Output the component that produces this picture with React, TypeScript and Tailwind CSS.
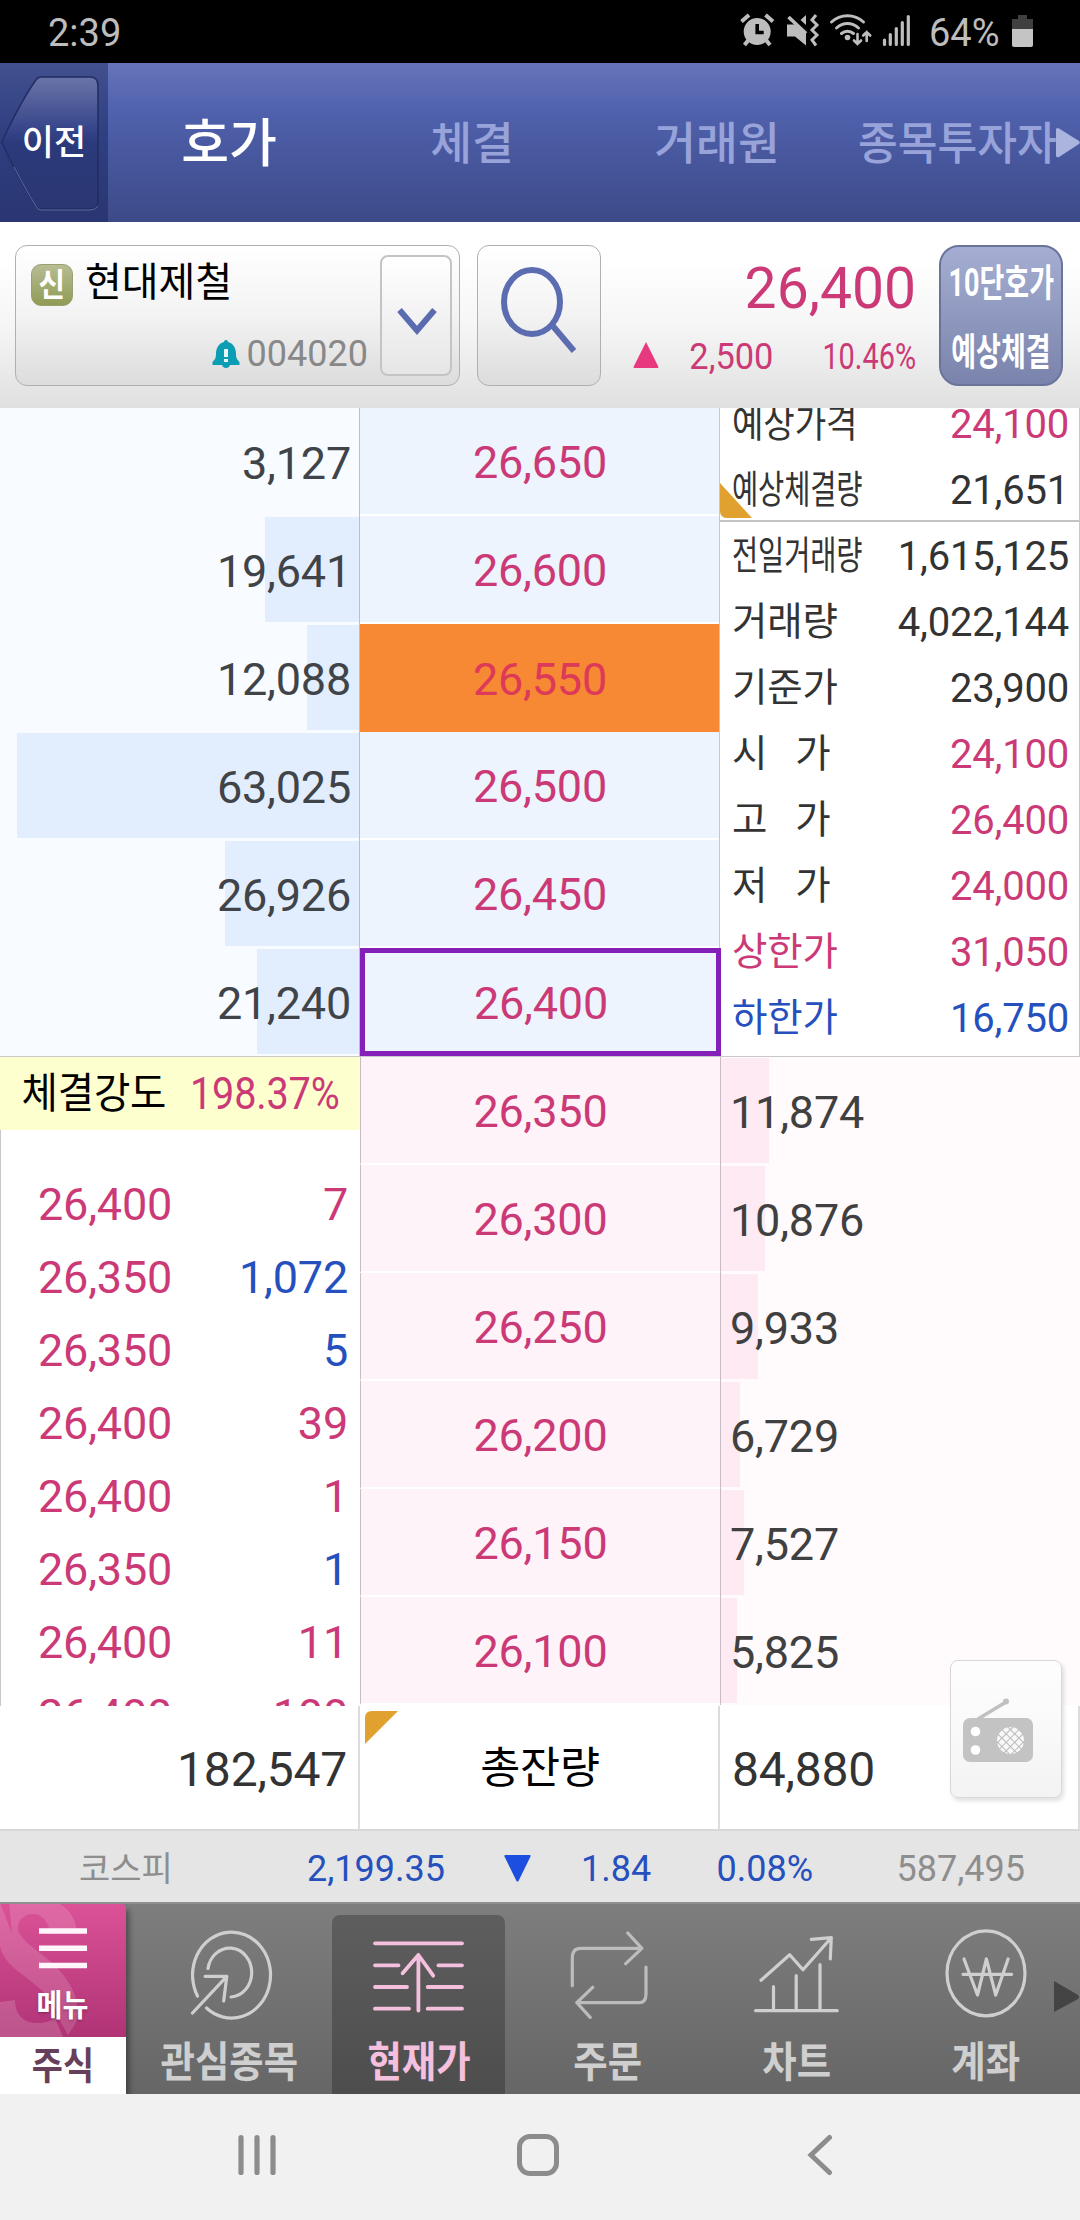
import { ReactNode } from 'react';

const UP = 'text-[#cb3a76]';
const DOWN = 'text-[#2550bd]';
const INK = 'text-[#333333]';

const TABS = [
  { label: '체결', cls: 'w-[240px] pl-[4px]' },
  { label: '거래원', cls: 'w-[248px] pl-[6px]' },
];

const ASKS = [
  { price: '26,650', qty: '3,127', bar: 0 },
  { price: '26,600', qty: '19,641', bar: 94 },
  { price: '26,550', qty: '12,088', bar: 52, marked: true },
  { price: '26,500', qty: '63,025', bar: 342 },
  { price: '26,450', qty: '26,926', bar: 134 },
  { price: '26,400', qty: '21,240', bar: 102, current: true },
];

const BIDS = [
  { price: '26,350', qty: '11,874', bar: 48 },
  { price: '26,300', qty: '10,876', bar: 44 },
  { price: '26,250', qty: '9,933', bar: 37 },
  { price: '26,200', qty: '6,729', bar: 19 },
  { price: '26,150', qty: '7,527', bar: 23 },
  { price: '26,100', qty: '5,825', bar: 16 },
];

const INFO = [
  { label: '예상가격', value: '24,100', color: UP, squeeze: 'scale-x-[0.89]' },
  { label: '예상체결량', value: '21,651', squeeze: 'scale-x-[0.74]' },
  { label: '전일거래량', value: '1,615,125', squeeze: 'scale-x-[0.74]' },
  { label: '거래량', value: '4,022,144' },
  { label: '기준가', value: '23,900' },
  { label: '시   가', value: '24,100', color: UP },
  { label: '고   가', value: '26,400', color: UP },
  { label: '저   가', value: '24,000', color: UP },
  { label: '상한가', value: '31,050', color: UP, labelColor: UP },
  { label: '하한가', value: '16,750', color: DOWN, labelColor: DOWN },
];

const TRADES = [
  { price: '26,400', qty: '7', color: UP },
  { price: '26,350', qty: '1,072', color: DOWN },
  { price: '26,350', qty: '5', color: DOWN },
  { price: '26,400', qty: '39', color: UP },
  { price: '26,400', qty: '1', color: UP },
  { price: '26,350', qty: '1', color: DOWN },
  { price: '26,400', qty: '11', color: UP },
  { price: '26,400', qty: '100', color: UP },
];

function StatusBar() {
  return (
    <div className="flex h-[63px] items-center bg-black pt-[2px] text-[38px] text-[#bdbdbd]">
      <span className="pl-[48px]">2:39</span>
      <svg className="-mt-[2px] ml-auto" width="185" height="63" viewBox="0 0 185 63" fill="#bdbdbd">
        {/* alarm */}
        <path d="M2.500 21.500 10 15M34 21.500 26.500 15" stroke="#bdbdbd" strokeWidth="4" />
        <circle cx="18.200" cy="31.500" r="13.500" />
        <path d="M9.500 40 5.500 45M27 40l4 5" stroke="#bdbdbd" strokeWidth="4" />
        <path d="M18.200 24v8.500h6.500" fill="none" stroke="#000" strokeWidth="3.600" />
        {/* muted, vibrating */}
        <path d="M48 24.500h7l12 7.500v13.500L56 36.500h-8zM67 15v10l-5.500-5z" />
        <path d="M49.500 17 67 33.500" stroke="#bdbdbd" strokeWidth="3.600" />
        <path d="m77 15-4 5 5 5-5 5 5 5-5 5 4 5.500" fill="none" stroke="#bdbdbd" strokeWidth="3" />
        {/* wifi */}
        <g fill="none" stroke="#bdbdbd" strokeWidth="3" strokeLinecap="round">
          <path d="M92.500 22c9-8.500 23-8.500 32 0M97.500 28c6.500-6 15.500-6 22 0M102.500 33.500c3.500-3 8.500-3 12 0" />
          <path d="M118.500 34v9M115 40.500l3.500 3.500 3.500-3.500M127.700 41v-9M124.200 35.500l3.500-3.500 3.500 3.500" strokeWidth="2.600" />
        </g>
        <circle cx="108.500" cy="37.500" r="2.800" />
        {/* signal */}
        <path d="M145.500 40v4.500M151.300 34.500v10M157.300 28.500v16M163.300 22.500v22M169.300 16.500v28" stroke="#bdbdbd" strokeWidth="3.200" strokeLinecap="round" />
      </svg>
      <span className="ml-[5px] w-[71px]">64%</span>
      <svg className="-mt-[2px] mr-[46px] ml-[12px]" width="22" height="63" viewBox="0 0 22 63">
        <path d="M6 15h9v4h6v10H0V19h6z" fill="#404040" />
        <path d="M0 29h21v16a2 2 0 0 1-2 2H2a2 2 0 0 1-2-2z" fill="#c4c4c4" />
      </svg>
    </div>
  );
}

function TopTabs() {
  return (
    <header className="flex h-[159px] bg-linear-to-b from-[#6675ba] via-[#5061ad] via-30% to-[#3c4a88]">
      <div className="relative flex w-[108px] items-center justify-center bg-linear-to-b from-[#42508f] via-[#2f3f80] via-45% to-[#293672]">
        <svg className="absolute inset-0" width="108" height="159" viewBox="0 0 108 159">
          <defs>
            <linearGradient id="back" x1="0" y1="0" x2="0" y2="1">
              <stop offset="0" stopColor="#6a74a8" />
              <stop offset="0.400" stopColor="#36458a" />
              <stop offset="0.500" stopColor="#2b3a7b" />
              <stop offset="1" stopColor="#2a3772" />
            </linearGradient>
          </defs>
          <path d="M1.500 79C12 58 22 36 36 17q2-3 5-3h49q8 0 8 9v114q0 9-8 9H41q-3 0-5-3C22 123 12 101 1.500 79z" fill="url(#back)" stroke="#222d62" strokeWidth="1.500" />
          <path d="M14 104c7 13 13 25 22 39q2 4 5 4h49q5 0 8-4" fill="none" stroke="#5d68a0" strokeWidth="1" />
        </svg>
        <span className="relative mt-[2px] text-[35px] font-medium text-white">이전</span>
      </div>
      <div className="flex min-w-0 flex-1 items-center pt-[4px] text-[45.500px] font-medium text-[#98a3da]">
        <span className="w-[242px] text-center text-[52px] font-medium text-white">호가</span>
        {TABS.map(t => (
          <span key={t.label} className={`${t.cls} text-center`}>{t.label}</span>
        ))}
        <span className="origin-left scale-x-[0.95] pl-[21px] whitespace-nowrap">종목투자자</span>
      </div>
      <svg className="absolute left-[1055px] top-[127px]" width="25" height="32" viewBox="0 0 25 32">
        <path d="M1 3q0-3 3-1.500l20 12.500q1.500 1.500 0 3L4 30q-3 1-3-1.500z" fill="#aab4df" />
      </svg>
    </header>
  );
}

function StockBar() {
  return (
    <div className="flex h-[186px] items-start bg-linear-to-b from-white from-20% via-[#f6f6f6] via-55% to-[#e0e0e0] pt-[23px]">
      <div className="ml-[15px] flex h-[141px] w-[445px] rounded-xl border border-[#b0b0b0] bg-linear-to-b from-white via-[#f3f3f3] to-[#dcdcdc]">
        <div className="flex flex-1 flex-col">
          <div className="flex items-center pt-[12px] pl-[15px]">
            <div className="mt-[4px] flex h-[42px] w-[42px] items-center justify-center rounded-[10px] border border-[#9aa070] bg-linear-to-b from-[#b8bc94] to-[#909b55] text-[32px] leading-none font-bold text-white">
              <span className="scale-x-[0.9]">신</span>
            </div>
            <span className="ml-[12px] text-[40px] leading-[50px] text-black">현대제철</span>
          </div>
          <div className="mt-[21px] flex items-center justify-end pr-[12px] text-[36px] leading-[50px] text-[#888]">
            <svg className="mr-[7px]" width="28" height="28" viewBox="0 0 28 28">
              <path d="M14 0q2 0 2 2c6 1.500 8 7 8 12 0 4 1 5.500 3.500 8v3H18q-1 3-4 3t-4-3H.5v-3C3 19.500 4 18 4 14 4 9 6 3.500 12 2q0-2 2-2z" fill="#0a9db3" />
              <path d="M14 9v8M14 19v3" stroke="#e8f8fa" strokeWidth="4" />
            </svg>
            <span>004020</span>
          </div>
        </div>
        <div className="mt-[9px] mr-[7px] flex h-[121px] w-[72px] items-center justify-center rounded-lg border-2 border-[#c4c4c4] bg-linear-to-b from-white to-[#e6e6e6]">
          <svg className="mt-[8px] ml-[1px]" width="42" height="32" viewBox="0 0 42 32">
            <path d="M3.500 6 21 26.500 38.500 6" fill="none" stroke="#5a6bb0" strokeWidth="6" />
          </svg>
        </div>
      </div>
      <div className="ml-[17px] h-[141px] w-[124px] rounded-xl border border-[#b0b0b0] bg-linear-to-b from-white via-[#f3f3f3] to-[#dcdcdc]">
        <svg width="122" height="139" viewBox="0 0 122 139" fill="none" stroke="#5b6cb0" strokeWidth="6">
          <ellipse cx="54" cy="56" rx="28" ry="32" />
          <path d="m74 79 22 26" />
        </svg>
      </div>
      <div className="flex w-[315px] flex-col">
        <span className={`mt-[9px] text-right text-[57px] leading-[70px] ${UP}`}>26,400</span>
        <div className={`mt-[10px] flex items-center justify-end text-[37px] leading-[46px] ${UP}`}>
          <svg className="mb-[4px]" width="26" height="26" viewBox="0 0 26 26">
            <path d="M13 0 25.500 25q0 1-1 1h-23q-1 0-1-1z" fill="#e8397f" />
          </svg>
          <span className="ml-[24px] w-[90px] origin-right scale-x-[0.93]">2,500</span>
          <span className="ml-[23px] w-[120px] origin-right scale-x-[0.78]">10.46%</span>
        </div>
      </div>
      <div className="ml-[23px] flex h-[141px] w-[124px] flex-col items-center rounded-[20px] border-2 border-[#6a7499] bg-linear-to-b from-[#a5aed2] to-[#7a83ab] text-[38px] leading-[70px] font-bold whitespace-nowrap text-white">
        <div className="flex h-[70px] justify-center pt-[1px]"><span className="scale-x-[0.71]">10단호가</span></div>
        <div className="h-[2px] w-[116px] bg-[#c3cae4]" />
        <div className="flex h-[67px] justify-center"><span className="scale-x-[0.71]">예상체결</span></div>
      </div>
    </div>
  );
}

function AskRow({ price, qty, bar, marked, current }: { price: string; qty: string; bar: number; marked?: boolean; current?: boolean }) {
  let cell = 'w-[359px] border-b-2 border-white bg-[#edf4fe]';
  if (marked) cell = 'w-[359px] bg-[#f78834] text-[#dc3a58]';
  // last traded price, its frame overlaps the column rule
  if (current) cell = 'relative z-10 w-[361px] border-[5px] border-[#8420b8] bg-[#edf4fe]';
  return (
    <div className="flex h-[108px]">
      <div className="relative flex w-[360px] shrink-0 items-center justify-end border-r border-[#bcc0c6] bg-[#f8fbff] pt-[3px] pr-[8px] text-[#404448]">
        <div className="absolute top-px right-0 bottom-[2px] bg-[#e2edfd]" style={{ width: bar }} />
        <span className="relative">{qty}</span>
      </div>
      <div className={`flex shrink-0 items-center justify-center pt-[3px] pl-[1px] ${marked ? '' : UP} ${cell}`}>{price}</div>
    </div>
  );
}

function InfoPanel() {
  return (
    <div className="h-[648px] flex-1 overflow-hidden border-r border-l border-[#c8c8c8] bg-white">
      <div className={`-mt-[18px] text-[40px] ${INK}`}>
        {INFO.map((r, i) => (
          <div key={i} className={`relative flex h-[66px] items-center justify-between pr-[10px] pl-[12px] ${i === 1 ? 'border-b-2 border-[#c4c4c4] pt-[5px]' : 'pt-[3px]'}`}>
            {i === 1 && (
              <svg className="absolute bottom-[2px] left-0" width="32" height="35" viewBox="0 0 32 35">
                <path d="M0 0 32 35H7q-7 0-7-7z" fill="#e0a12e" />
              </svg>
            )}
            <span className={`relative w-[110px] origin-left text-[38.500px] whitespace-pre ${r.squeeze ?? ''} ${r.labelColor ?? ''}`}>{r.label}</span>
            <span className={r.color ?? ''}>{r.value}</span>
          </div>
        ))}
      </div>
    </div>
  );
}

function OrderBook() {
  return (
    <div className="flex h-[1298px] flex-col text-[45px] tracking-[-0.2px]">
      <div className="flex">
        <div className="w-[719px]">
          {ASKS.map(a => <AskRow key={a.price} {...a} />)}
        </div>
        <InfoPanel />
      </div>
      <div className="flex h-[650px] overflow-hidden border-t border-[#c8c8c8]">
        <div className="flex w-[360px] flex-col bg-white">
          <div className="flex h-[73px] shrink-0 items-center bg-[#feffce]">
            <span className="w-[164px] origin-left scale-x-[0.94] pl-[23px] text-[42px] whitespace-nowrap text-black">체결강도</span>
            <span className={`ml-[26px] origin-left scale-x-[0.88] ${UP}`}>198.37%</span>
          </div>
          <div className="h-[576px] overflow-hidden border-l border-[#c8c8c8] pt-[38px]">
            {TRADES.map((t, i) => (
              <div key={i} className="flex h-[73px] items-center justify-between pr-[12px] pl-[37px]">
                <span className={UP}>{t.price}</span>
                <span className={t.color}>{t.qty}</span>
              </div>
            ))}
          </div>
        </div>
        <div className="flex-1">
          {BIDS.map(b => (
            <div key={b.price} className="flex h-[108px]">
              <div className={`flex w-[360px] items-center justify-center border-b-2 border-l border-b-white border-l-[#c8bcc4] bg-[#fef3f9] pt-[3px] ${UP}`}>{b.price}</div>
              <div className="relative flex flex-1 items-center border-l border-[#c8bcc4] bg-[#fffafb] pt-[3px] pl-[9px] text-[#404040]">
                <div className="absolute top-px bottom-[2px] left-0 bg-[#fdeaf3]" style={{ width: b.bar }} />
                <span className="relative">{b.qty}</span>
              </div>
            </div>
          ))}
        </div>
      </div>
    </div>
  );
}

function Totals() {
  return (
    <div className="relative flex h-[125px] border-b-2 border-[#d8d8d8] bg-white text-[48px] tracking-[-0.2px]">
      <div className={`flex w-[360px] items-center justify-end border-r-2 border-[#dcdcdc] pt-[4px] pr-[11px] ${INK}`}>182,547</div>
      <div className="relative flex w-[360px] items-center justify-center border-r-2 border-[#dcdcdc] pt-[2px] pl-[2px] text-[43.500px] text-black">
        <svg className="absolute top-[5px] left-[5px]" width="33" height="33" viewBox="0 0 33 33">
          <path d="M0 33V7q0-7 7-7h26z" fill="#e0a12e" />
        </svg>
        총잔량
      </div>
      <div className={`flex flex-1 items-center border-r-2 border-[#dcdcdc] pt-[4px] pl-[12px] ${INK}`}>84,880</div>
      <div className="absolute -top-[46px] left-[950px] h-[138px] w-[112px] rounded-lg border border-[#d8d8d8] bg-linear-to-b from-white/80 to-[#f3f3f3] shadow-[2px_3px_4px_rgba(0,0,0,0.12)]">
        <svg width="110" height="136" viewBox="0 0 110 136">
          <defs>
            <pattern id="mesh" width="6" height="6" patternUnits="userSpaceOnUse" patternTransform="rotate(45)">
              <rect width="6" height="6" fill="#f8f8f8" />
              <path d="M0 0h6M0 0v6" stroke="#bbb" strokeWidth="2" />
            </pattern>
          </defs>
          <path d="M27 58 55 41" stroke="#c0c0c0" strokeWidth="3.500" />
          <circle cx="55" cy="40.500" r="3" fill="#c0c0c0" />
          <rect x="12" y="57" width="70" height="44" rx="7" fill="#c3c3c3" />
          <circle cx="24.500" cy="70.500" r="4.800" fill="#fff" />
          <circle cx="24.500" cy="89" r="4.800" fill="#fff" />
          <circle cx="59.500" cy="79.500" r="13.500" fill="url(#mesh)" />
        </svg>
      </div>
    </div>
  );
}

function IndexTicker() {
  return (
    <div className={`flex h-[71px] items-center bg-[#e5e5e5] pt-[5px] text-[36px] ${DOWN}`}>
      <span className="w-[227px] pl-[79px] text-[34px] text-[#8e8e8e]">코스피</span>
      <span className="w-[218px] text-right">2,199.35</span>
      <svg className="-mt-[2px] ml-[59px]" width="27" height="27" viewBox="0 0 27 27">
        <path d="M1 0h25q1 .500.500 1.500L14.500 26q-1 1-2 0L.500 1.500Q0 .500 1 0z" fill="#1c4fdf" />
      </svg>
      <span className="ml-[50px] w-[70px]">1.84</span>
      <span className="w-[162px] text-right">0.08%</span>
      <span className="w-[212px] text-right text-[#8e8e8e]">587,495</span>
    </div>
  );
}

function NavItem({ label, active, thin, children }: { label: string; active?: boolean; thin?: boolean; children: ReactNode }) {
  return (
    <div className="flex w-[189px] shrink-0 justify-center">
      <div className={`flex w-[173px] flex-col items-center rounded-t-lg ${active ? 'mt-[11px] bg-linear-to-b from-[#5e5e5e] to-[#4d4d4d] pt-[5px] text-[#f5c0dd]' : 'pt-[15px] text-[#cfcfcf]'}`}>
        <svg width="100" height="110" viewBox="0 0 100 110" fill="none" stroke="currentColor" strokeWidth={active ? 3.8 : 3.2} strokeLinecap="round" strokeLinejoin="round" opacity={thin ? 0.8 : 1}>
          {children}
        </svg>
        <span className={`scale-x-[0.89] text-[42px] leading-[54px] font-bold whitespace-nowrap ${active ? 'mt-[6px]' : 'mt-[7px]'}`}>{label}</span>
      </div>
    </div>
  );
}

function BottomNav() {
  return (
    <nav className="relative flex h-[192px] overflow-hidden border-t-2 border-[#8f8f8f] bg-linear-to-b from-[#7e7e7e] to-[#666666]">
      <div className="z-10 -mt-[2px] flex w-[126px] shrink-0 flex-col shadow-[3px_8px_6px_rgba(0,0,0,0.4)]">
        <div className="relative flex h-[135px] flex-col items-center overflow-hidden rounded-tr-lg bg-linear-to-b from-[#dc5298] to-[#b03376]">
          <svg className="absolute inset-0" width="126" height="135" viewBox="0 0 126 135" fill="#fff">
            <path d="M9 0h48c14 8 19 18 20 30H50C48 18 40 11 32 12c-10 1-15 8-14 16 6 20 56 34 60 80 0 12-5 18-10 25l-9-16C55 90 22 76 8 60 2 52 0 46 0 42V0l12 32z" opacity="0.14" />
            <path d="M0 100l15-2c0 16 10 23 22 23 8 0 14-2 18-5l8 19H0z" opacity="0.16" />
          </svg>
          <svg className="relative mt-[26px]" width="48" height="41" viewBox="0 0 48 41">
            <path d="M0 3h48M0 20.300h48M0 37.500h48" stroke="#fff5fb" strokeWidth="5.500" />
          </svg>
          <span className="relative mt-[17px] scale-x-[0.91] text-[31px] leading-[40px] font-bold text-white text-shadow-md">메뉴</span>
        </div>
        <div className="flex flex-1 items-center justify-center bg-white">
          <span className="scale-x-[0.89] text-[38px] leading-[50px] font-bold text-[#66405a]">주식</span>
        </div>
      </div>
      <div className="ml-[9px] flex">
        <NavItem label="관심종목">
          <path d="M17.500 77A39 43 0 1 1 26.500 89M28 49.500A22 24.500 0 1 1 51 78M12.500 94 46.800 57.300M25.100 57.300h21.700L43.700 82" />
        </NavItem>
        <NavItem label="현재가" active>
          <path d="M6 23.300h87M6 45.300h23.500M69.400 45.300H93M6 67h32M58.700 67H93M6 88.700h34M58.700 88.700H93M49.400 35v55.500M33.600 53.300 49.400 35l14.800 20.700" />
        </NavItem>
        <NavItem label="주문" thin>
          <path d="M14.300 66.700V39q0-9.700 8.300-9.700h61.300M69.800 14l14.100 15.300-16.200 15.400M88 48v27q0 8.700-7 8.700H18.800M34.700 68.300 18.800 83.700l13.400 14.600" />
        </NavItem>
        <NavItem label="차트">
          <path d="m14 61.300 28.700-25.600L56 50.700l28.300-32M64.300 20.300l20-1.600-1 21.300M26.500 67.700v23M49.200 56.700v34M73 45.700v45M8.600 91.700h81.600" />
        </NavItem>
        <NavItem label="계좌">
          <ellipse cx="50" cy="54.300" rx="39" ry="42.500" />
          <path d="m28 40 13.500 36L50.400 40l9.300 36 12.400-36M27 55.300h48.600" />
        </NavItem>
      </div>
      <svg className="absolute top-[77px] left-[1054px]" width="26" height="32" viewBox="0 0 26 32">
        <path d="M0 0 24 14q2 2 0 4L0 31z" fill="#444" />
      </svg>
    </nav>
  );
}

function SystemNav() {
  return (
    <div className="flex h-[126px] items-center bg-[#f1f1f1] pb-[4px] pl-[238px]">
      <svg width="38" height="42" viewBox="0 0 38 42" stroke="#8c8c8c" strokeWidth="5.200" strokeLinecap="round">
        <path d="M3 3.500v35M19 3.500v35M35 3.500v35" />
      </svg>
      <div className="ml-[241px] h-[42px] w-[42px] rounded-[13px] border-[5px] border-[#8c8c8c]" />
      <svg className="ml-[248px]" width="26" height="42" viewBox="0 0 26 42" fill="none" stroke="#8c8c8c" strokeWidth="5" strokeLinecap="round">
        <path d="M22.500 3.500 4 21l18.500 17.500" />
      </svg>
    </div>
  );
}

export default function App() {
  return (
    <div className="relative w-[1080px] overflow-hidden bg-white font-['Roboto','Noto_Sans_CJK_KR',sans-serif] leading-none">
      <StatusBar />
      <TopTabs />
      <StockBar />
      <OrderBook />
      <Totals />
      <IndexTicker />
      <BottomNav />
      <SystemNav />
    </div>
  );
}
